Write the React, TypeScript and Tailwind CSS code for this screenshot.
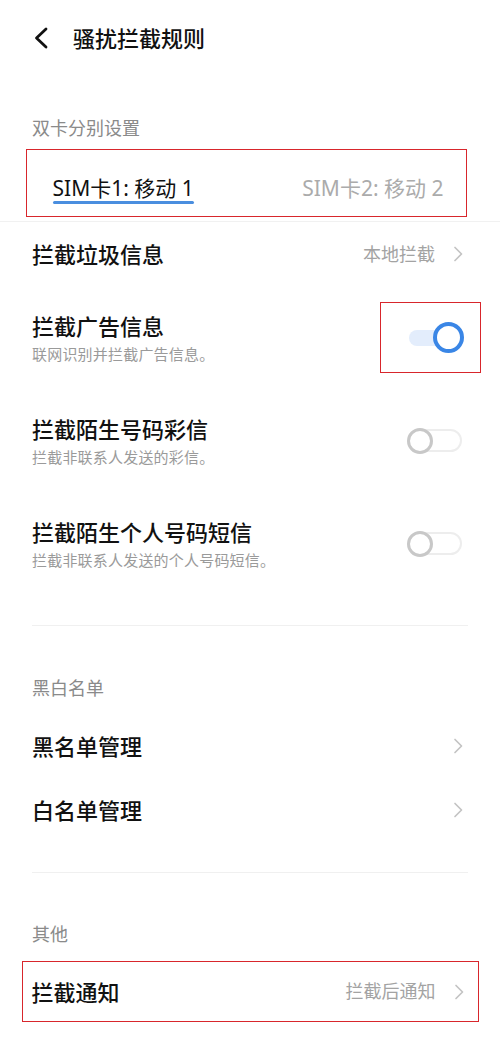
import React from "react";

const font = { fontFamily: '"Noto Sans", "Noto Sans CJK SC", sans-serif' };

const Chevron = () => (
  <svg width="10" height="16" viewBox="0 0 10 16" fill="none" className="shrink-0">
    <path d="M2 1.5 L8.5 8 L2 14.5" stroke="#c4c4c4" strokeWidth="1.7" strokeLinecap="round" strokeLinejoin="round" />
  </svg>
);

const ToggleOff = () => (
  <div className="relative w-[56px] h-[26px] shrink-0">
    <div className="absolute left-[3px] top-[1.5px] w-[52px] h-[23px] rounded-full border-2 border-[#ededed] bg-white" />
    <div className="absolute left-0 top-0 w-[26px] h-[26px] rounded-full border-[3.5px] border-[#c8c8c8] bg-white" />
  </div>
);

const ToggleOn = () => (
  <div className="relative w-[55px] h-[31px] shrink-0">
    <div className="absolute left-0 top-[7.5px] w-[46px] h-[16px] rounded-full bg-[#e3edfc]" />
    <div className="absolute right-0 top-0 w-[31px] h-[31px] rounded-full border-4 border-[#3a86e6] bg-white" />
  </div>
);

const SectionLabel = ({ text, className }: { text: string; className: string }) => (
  <div className={`px-[32px] text-[18px] leading-[24px] text-[#8a8a8a] ${className}`}>{text}</div>
);

interface ToggleRowProps { title: string; desc: string; on?: boolean }
const ToggleRow: React.FC<ToggleRowProps> = ({ title, desc, on }) => (
  <div className="flex items-center justify-between h-[103px] pl-[32px] pr-[37px]">
    <div className="flex flex-col">
      <span className="text-[22px] leading-[30px] font-medium text-[#111]">{title}</span>
      <span className="mt-[3px] text-[15px] leading-[20px] text-[#9a9a9a] tracking-[0.2px]">{desc}</span>
    </div>
    {on ? (
      <div className="-mr-[18px] flex items-center justify-end w-[101px] h-[71px] pr-[16.5px] border-[1.5px] border-[#d8262c]">
        <ToggleOn />
      </div>
    ) : (
      <ToggleOff />
    )}
  </div>
);

const LinkRow = ({ title, value }: { title: string; value?: string }) => (
  <div className="flex items-center justify-between h-[64px] pl-[32px] pr-[37px]">
    <span className="text-[22px] leading-[30px] font-medium text-[#111]">{title}</span>
    <div className="flex items-center gap-[18px]">
      {value && <span className="text-[18px] text-[#a3a3a3]">{value}</span>}
      <Chevron />
    </div>
  </div>
);

export default function App() {
  return (
    <div className="w-[500px] h-[1044px] bg-white overflow-hidden" style={font}>
      {/* header */}
      <div className="flex items-center h-[76px] pl-[33px]">
        <svg width="16" height="22" viewBox="0 0 16 22" fill="none">
          <path d="M13 2 L3.5 11 L13 20" stroke="#111" strokeWidth="2.8" strokeLinecap="round" strokeLinejoin="round" />
        </svg>
        <span className="ml-[24px] text-[22px] font-medium text-[#111]">骚扰拦截规则</span>
      </div>

      <SectionLabel text="双卡分别设置" className="mt-[40px]" />

      {/* sim tabs */}
      <div className="mt-[9px] ml-[26px] w-[441px] h-[68px] border-[1.5px] border-[#d8262c] flex justify-between pl-[25.5px] pr-[22.5px] pt-[26px]">
        <div className="flex flex-col">
          <span className="text-[21px] leading-[24px] text-[#111]">SIM卡1: 移动 1</span>
          <div className="mt-[1px] h-[3px] bg-[#4a8edf] rounded-full" />
        </div>
        <span className="text-[21px] leading-[24px] text-[#ababab]">SIM卡2: 移动 2</span>
      </div>
      <div className="mt-[4px] h-px bg-[#f1f1f1]" />

      <LinkRow title="拦截垃圾信息" value="本地拦截" />
      <ToggleRow title="拦截广告信息" desc="联网识别并拦截广告信息。" on />
      <ToggleRow title="拦截陌生号码彩信" desc="拦截非联系人发送的彩信。" />
      <ToggleRow title="拦截陌生个人号码短信" desc="拦截非联系人发送的个人号码短信。" />

      <div className="mt-[30px] mx-[32px] h-px bg-[#f0f0f0]" />

      <SectionLabel text="黑白名单" className="mt-[50px]" />
      <div className="mt-[14px]">
        <LinkRow title="黑名单管理" />
        <LinkRow title="白名单管理" />
      </div>

      <div className="mt-[30px] mx-[32px] h-px bg-[#f0f0f0]" />

      <SectionLabel text="其他" className="mt-[49px]" />
      <div className="mt-[15px] ml-[22px] w-[457px] h-[61px] border-[1.5px] border-[#d8262c] flex items-center justify-between pl-[8.5px] pr-[14.5px]">
        <span className="text-[22px] leading-[30px] font-medium text-[#111]">拦截通知</span>
        <div className="flex items-center gap-[18px]">
          <span className="text-[18px] text-[#a3a3a3]">拦截后通知</span>
          <Chevron />
        </div>
      </div>
    </div>
  );
}
